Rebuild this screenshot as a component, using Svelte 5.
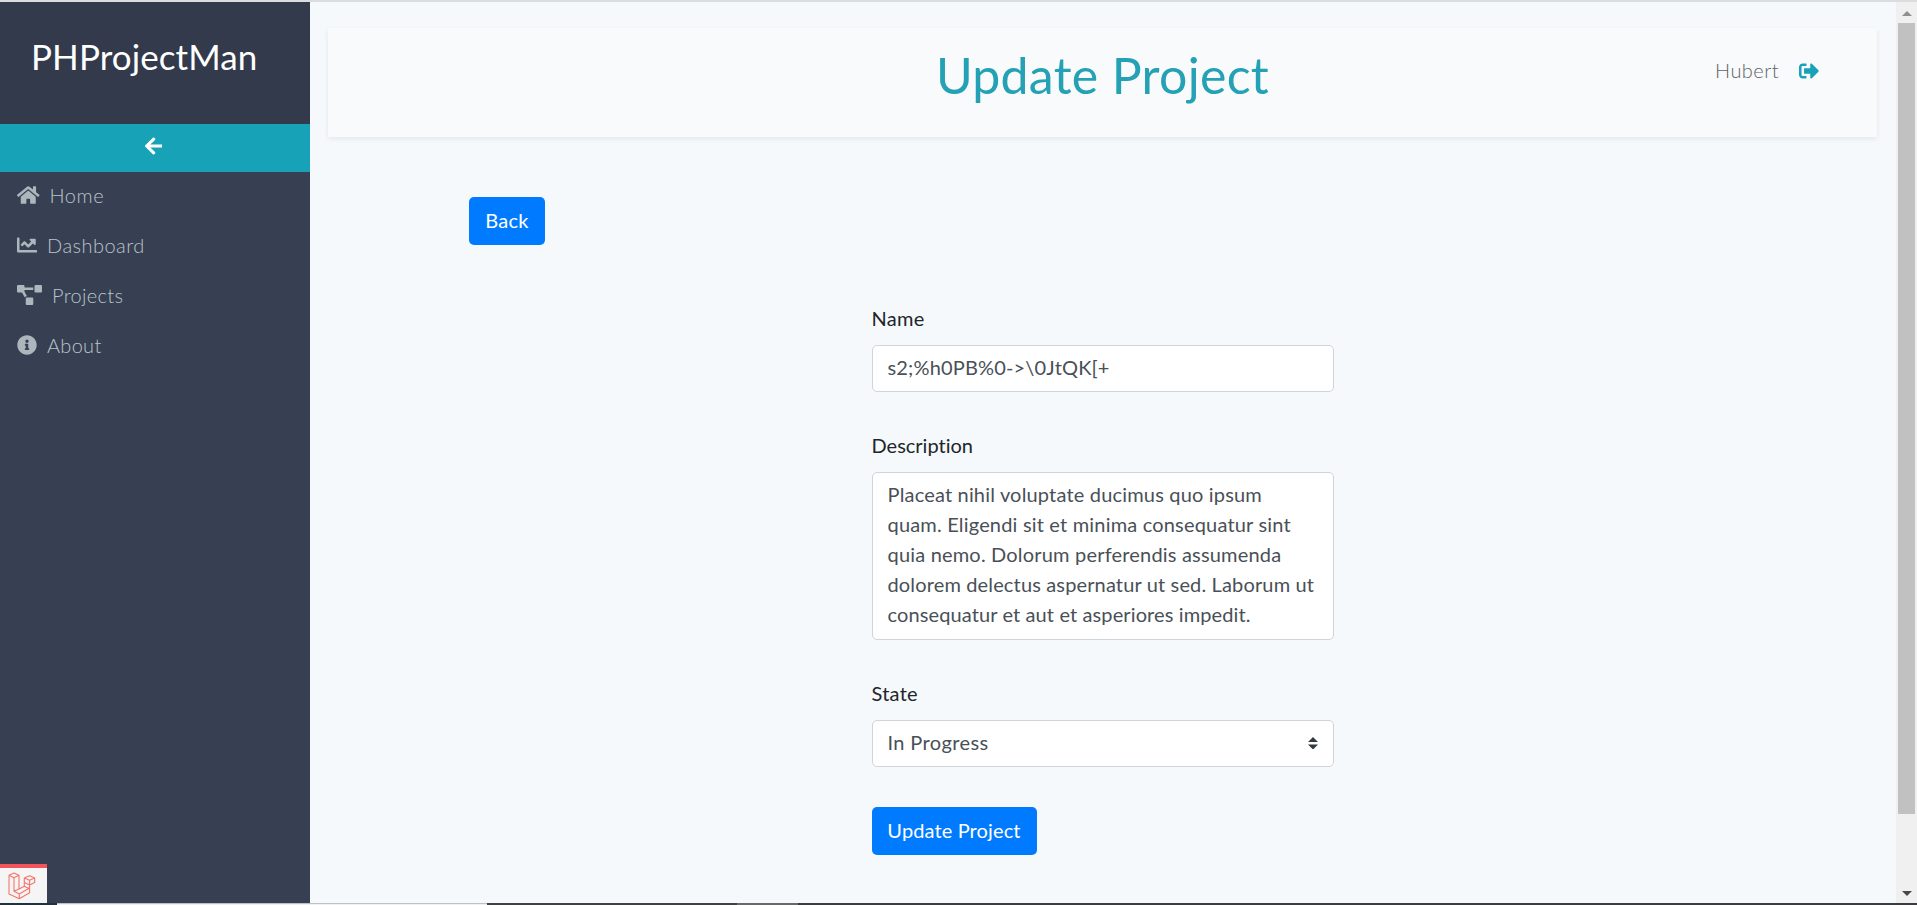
<script>
  const links = [
    { label: 'Home', width: 22.5, box: '0 0 576 512', spacing: 0.55, icon: 'M280.37 148.26L96 300.11V464a16 16 0 0 0 16 16l112.06-.29a16 16 0 0 0 15.92-16V368a16 16 0 0 1 16-16h64a16 16 0 0 1 16 16v95.64a16 16 0 0 0 16 16.05L464 480a16 16 0 0 0 16-16V300L295.67 148.26a12.19 12.19 0 0 0-15.3 0zM571.6 251.47L488 182.56V44.05a12 12 0 0 0-12-12h-56a12 12 0 0 0-12 12v72.61L318.47 43a48 48 0 0 0-61 0L4.34 251.47a12 12 0 0 0-1.6 16.9l25.5 31A12 12 0 0 0 45.15 301l235.22-193.74a12.19 12.19 0 0 1 15.3 0L530.9 301a12 12 0 0 0 16.9-1.6l25.5-31a12 12 0 0 0-1.7-16.93z' },
    { label: 'Dashboard', width: 20, box: '0 0 512 512', spacing: 0.46, icon: 'M496 384H64V80c0-8.84-7.16-16-16-16H16C7.16 64 0 71.16 0 80v336c0 17.67 14.33 32 32 32h464c8.84 0 16-7.16 16-16v-32c0-8.84-7.16-16-16-16zM464 96H345.94c-21.38 0-32.09 25.85-16.97 40.97l32.4 32.4L288 242.75l-73.37-73.37c-12.5-12.5-32.76-12.5-45.25 0l-68.69 68.69c-6.25 6.25-6.25 16.38 0 22.63l22.62 22.62c6.25 6.25 16.38 6.25 22.63 0L192 237.25l73.37 73.37c12.5 12.5 32.76 12.5 45.25 0l96-96 32.4 32.4c15.12 15.12 40.97 4.41 40.97-16.97V112c.01-8.84-7.15-16-15.99-16z' },
    { label: 'Projects', width: 25, box: '0 0 640 512', spacing: 0.32, icon: 'M384 320H256c-17.67 0-32 14.33-32 32v128c0 17.67 14.33 32 32 32h128c17.67 0 32-14.33 32-32V352c0-17.67-14.33-32-32-32zM192 32c0-17.67-14.33-32-32-32H32C14.33 0 0 14.33 0 32v128c0 17.67 14.33 32 32 32h95.72l73.16 128.04C211.98 300.98 232.4 288 256 288h.28L192 175.51V128h224V64H192V32zM608 0H480c-17.67 0-32 14.33-32 32v128c0 17.67 14.33 32 32 32h128c17.67 0 32-14.33 32-32V32c0-17.67-14.33-32-32-32z' },
    { label: 'About', width: 20, box: '0 0 512 512', spacing: 0.3, icon: 'M256 8C119.043 8 8 119.083 8 256c0 136.997 111.043 248 248 248s248-111.003 248-248C504 119.083 392.957 8 256 8zm0 110c23.196 0 42 18.804 42 42s-18.804 42-42 42-42-18.804-42-42 18.804-42 42-42zm56 254c0 6.627-5.373 12-12 12h-88c-6.627 0-12-5.373-12-12v-24c0-6.627 5.373-12 12-12h12v-64h-12c-6.627 0-12-5.373-12-12v-24c0-6.627 5.373-12 12-12h64c6.627 0 12 5.373 12 12v100h12c6.627 0 12 5.373 12 12v24z' }
  ];

  const description = [
    { text: 'Placeat nihil voluptate ducimus quo ipsum', spacing: 0.177 },
    { text: 'quam. Eligendi sit et minima consequatur sint', spacing: 0.183 },
    { text: 'quia nemo. Dolorum perferendis assumenda', spacing: 0.185 },
    { text: 'dolorem delectus aspernatur ut sed. Laborum ut', spacing: 0.144 },
    { text: 'consequatur et aut et asperiores impedit.', spacing: 0.115 }
  ];

  const name = 's2;%h0PB%0->\\0JtQK[+';
</script>

<div class="screen">
  <div class="top-edge"></div>
  <div class="window">
    <aside class="sidebar">
      <div class="brand">PHProjectMan</div>
      <div class="collapse">
        <svg width="17.5" height="20" viewBox="0 0 448 512"><path d="M257.5 445.1l-22.2 22.2c-9.4 9.4-24.6 9.4-33.9 0L7 273c-9.4-9.4-9.4-24.6 0-33.9L201.4 44.7c9.4-9.4 24.6-9.4 33.9 0l22.2 22.2c9.5 9.5 9.3 25-.4 34.3L136.6 216H424c13.3 0 24 10.7 24 24v32c0 13.3-10.7 24-24 24H136.6l120.5 114.8c9.8 9.3 10 24.8.4 34.3z" /></svg>
      </div>
      <nav>
        {#each links as link}
          <div class="link">
            <svg width={link.width} height="20" viewBox={link.box}><path d={link.icon} /></svg>
            <span style:letter-spacing="{link.spacing}px">{link.label}</span>
          </div>
        {/each}
      </nav>
      <div class="debugbar">
        <svg width="28" height="29" viewBox="0 0 28 29">
          <path d="M1 3.3 6 1l5 2.3L6 5.7zM1 3.3V22l10.3 4.7L21.600 20.700V13M6 5.700V19.300L11.300 22M11 3.300V17L6 19.300M11.300 22V26.700M11.300 22L21.600 16M11 17L16.300 14.200L21.600 16.700M16.300 6L21.600 3.700 26.700 6 21.600 8.300zM16.300 6V10.500L21.600 13 26.700 10.500V6M21.600 8.300V13M16.300 10.500V14.200" />
        </svg>
      </div>
    </aside>
    <main>
      <header>
        <h1>Update Project</h1>
        <div class="user">
          <span>Hubert</span>
          <svg width="20" height="20" viewBox="0 0 512 512"><path d="M497 273L329 441c-15 15-41 4.500-41-17v-96H152c-13.300 0-24-10.700-24-24v-96c0-13.300 10.700-24 24-24h136V88c0-21.400 25.900-32 41-17l168 168c9.300 9.400 9.300 24.600 0 34zM192 436v-40c0-6.600-5.400-12-12-12H96c-17.700 0-32-14.300-32-32V160c0-17.700 14.300-32 32-32h84c6.600 0 12-5.400 12-12V76c0-6.600-5.400-12-12-12H96c-53 0-96 43-96 96v192c0 53 43 96 96 96h84c6.600 0 12-5.400 12-12z" /></svg>
        </div>
      </header>
      <button class="back">Back</button>
      <form>
        <label for="name" class="l-name">Name</label>
        <input id="name" value={name} />
        <div class="label l-desc">Description</div>
        <div class="area">
          {#each description as line}
            <div style:letter-spacing="{line.spacing}px">{line.text}</div>
          {/each}
        </div>
        <div class="label l-state">State</div>
        <div class="select">
          <span>In Progress</span>
          <svg width="10" height="12.500" viewBox="0 0 4 5"><path d="M2 0L0 2h4zm0 5L0 3h4z" /></svg>
        </div>
        <button type="button" class="submit">Update Project</button>
      </form>
    </main>
    <div class="scrollbar">
      <svg class="up" width="10" height="5" viewBox="0 0 10 5"><path d="M5 0l5 5H0z" /></svg>
      <div class="thumb"></div>
      <svg class="down" width="10" height="5" viewBox="0 0 10 5"><path d="M0 0h10L5 5z" /></svg>
    </div>
  </div>
  <div class="bottom-edge"><i class="e1"></i><i class="e2"></i><i class="e3"></i><i class="e4"></i><i class="e5"></i></div>
</div>

<style>
  :global(body) { margin: 0; overflow: hidden; }
  .screen, .screen * { box-sizing: border-box; }
  .screen {
    width: 1917px;
    height: 905px;
    display: flex;
    flex-direction: column;
    background: #f5f9fc;
    font: 20px/30px Lato, "Open Sans", sans-serif;
    font-variant-ligatures: none;
    color: #212529;
    overflow: hidden;
  }
  svg { display: block; flex: none; fill: currentColor; }
  .top-edge { height: 2px; background: #dadce0; }
  .window { height: 901px; display: flex; }

  .sidebar { position: relative; width: 310px; background: #364052; }
  .brand {
    height: 122px;
    padding: 28px 0 0 31px;
    background: #323a4b;
    color: #fff;
    font-size: 35px;
    line-height: 52px;
    letter-spacing: 0.08px;
  }
  .collapse {
    height: 48px;
    display: flex;
    justify-content: center;
    padding: 12px 3px 0 0;
    background: #18a2b8;
    color: #fff;
  }
  .link {
    height: 50px;
    display: flex;
    align-items: flex-start;
    gap: 10px;
    padding: 8px 0 0 17px;
    color: #bcc3cb;
    font-weight: 300;
  }
  .link svg { margin-top: 5px; color: #adb6bc; }
  .debugbar {
    position: absolute;
    left: 0;
    bottom: 0;
    width: 47px;
    height: 39px;
    padding: 4px 0 0 8px;
    border-top: 4px solid #f4545c;
    background: #f5f5f5;
  }
  .debugbar svg { fill: none; stroke: #f4756c; stroke-width: 1.1; stroke-linejoin: round; }

  main { flex: 1; padding: 26px 19px 0 18px; }
  header {
    height: 109px;
    display: grid;
    grid-template-columns: 1fr auto 1fr;
    background: #f8fafc;
    box-shadow: 0 2px 5px rgba(0, 0, 0, 0.075);
  }
  h1 {
    grid-column: 2;
    margin: 0;
    padding-top: 17px;
    font-size: 50px;
    font-weight: 400;
    line-height: 60px;
    letter-spacing: 0.313px;
    color: #24a1b5;
  }
  .user {
    justify-self: end;
    display: flex;
    gap: 20px;
    padding: 27px 58px 0 0;
    font-weight: 300;
    letter-spacing: 0.45px;
    color: #5f6469;
  }
  .user svg { margin-top: 6px; color: #18a2b8; }

  button {
    display: block;
    height: 48px;
    padding: 0 0 3px;
    border: 0;
    border-radius: 5px;
    background: #007bff;
    color: #fff;
    font: 20px/30px Lato, "Open Sans", sans-serif;
  }
  .back { width: 76px; margin: 60px 0 0 141px; letter-spacing: 0.247px; }
  form { width: 462px; margin: 57px auto 0; }
  label, .label { display: block; height: 43px; padding-top: 1px; }
  .l-name { letter-spacing: 0.313px; }
  .l-state { letter-spacing: 0.25px; }
  input, .area, .select {
    display: block;
    width: 462px;
    border: 1px solid #ced4da;
    border-radius: 5px;
    background: #fff;
    color: #495057;
    font: 20px/30px Lato, "Open Sans", sans-serif;
    font-variant-ligatures: none;
  }
  input { height: 47px; margin: 0 0 37px; padding: 0 15px 3px; letter-spacing: 0.16px; }
  .area { height: 168px; margin-bottom: 37px; padding: 6px 15px; white-space: nowrap; }
  .select {
    height: 47px;
    display: flex;
    align-items: center;
    justify-content: space-between;
    padding: 0 15px 1px;
    letter-spacing: 0.38px;
  }
  .select span { padding-bottom: 2px; }
  .select svg { color: #343a40; }
  .submit { width: 165px; margin-top: 40px; letter-spacing: 0.125px; }

  .scrollbar { width: 21px; background: #f0f0f0; }
  .up { margin: 9px 0 7px 6px; color: #909090; }
  .thumb { width: 17px; height: 791px; margin-left: 2px; background: #c1c1c1; }
  .down { margin: 77px 0 0 6px; color: #484848; }

  .bottom-edge { height: 2px; display: flex; background: #3b3a3e; }
  .e1 { width: 57px; background: #22313a; }
  .e2 { width: 430px; border-top: 1px solid #bfc0c2; background: #eff1f3; }
  .e3 { width: 250px; background: #414043; }
  .e4 { width: 61px; background: #69686b; }
  .e5 { flex: 1; background: #3c3b3f; }
</style>
